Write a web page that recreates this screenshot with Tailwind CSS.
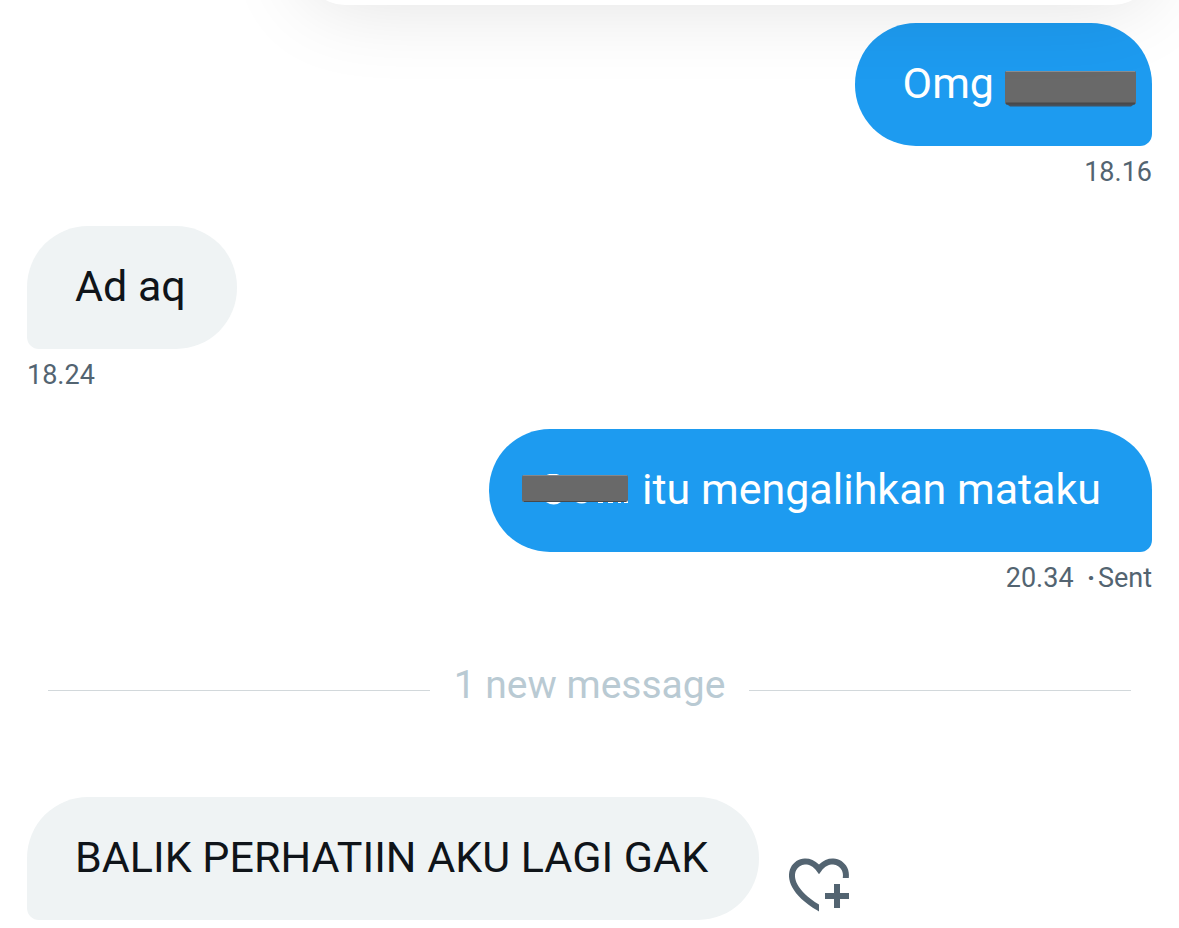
<!DOCTYPE html>
<html lang="id">
<head>
    <meta charset="UTF-8">
    <meta name="viewport" content="width=device-width, initial-scale=1.0">
    <title>Messages</title>
    <script src="https://cdn.jsdelivr.net/npm/@tailwindcss/browser@4"></script>
</head>
<body class="relative overflow-x-hidden bg-white font-['Roboto',sans-serif] text-[#0f1419]">

    <!-- Floating header card -->
    <header class="pointer-events-none absolute -top-[195px] right-[26px] left-[305px] z-10 h-[200px] rounded-[40px] bg-white shadow-[0_0_84px_rgba(0,0,0,0.12)]"></header>

    <main class="flex flex-col px-[27px] pt-[23px]">

        <!-- Sent -->
        <div class="flex flex-col items-end">
            <div class="flex items-center gap-[10px] rounded-[61px] rounded-br-xl bg-[#1d9bf0] pt-[31px] pr-[16px] pb-[33px] pl-[48px]">
                <p class="text-[43px] leading-[59px] text-white">Omg</p>
                <svg class="mt-[10px] h-9 w-[132px]" viewBox="0 0 132 36" aria-hidden="true">
                    <path d="M1 32h131l-5 3.500H6z" fill="#46525e" />
                    <rect x="1" width="131" height="33" rx="1.500" fill="#696969" />
                    <path d="M2 .5h129" stroke="#8b8d90" />
                    <path d="M2 32.500h129" stroke="#47484b" stroke-width="2" />
                </svg>
            </div>
            <time class="mt-2 text-[27px] leading-9 text-[#536471]">18.16</time>
        </div>

        <!-- Received -->
        <div class="mt-9 flex flex-col items-start">
            <div class="rounded-[61px] rounded-bl-xl bg-[#eff3f4] pt-[31px] pr-[51px] pb-[33px] pl-[48px]">
                <p class="text-[43px] leading-[59px]">Ad aq</p>
            </div>
            <time class="mt-2 text-[27px] leading-9 text-[#536471]">18.24</time>
        </div>

        <!-- Sent -->
        <div class="mt-9 flex flex-col items-end">
            <div class="flex items-center gap-[13px] rounded-[61px] rounded-br-xl bg-[#1d9bf0] pt-[31px] pr-[51px] pb-[33px] pl-[33px]">
                <svg class="h-8 w-[107px]" viewBox="0 0 107 32" aria-hidden="true">
                    <path d="M23 2q8-5 16 0zM24 28h15q-7 5-15 0zM54 28h11q-5 3-11 0zM76 27h5v2h-5zM86 27h5v2h-5zM96 27h3v2h-3zM102 26h4v3h-4z" fill="#fff" />
                    <rect y="1" width="106" height="27" rx="2" fill="#696969" />
                    <path d="M1 1.500h104" stroke="#85878a" />
                    <path d="M2 27.500h102" stroke="#47484b" />
                </svg>
                <p class="text-[43px] leading-[59px] text-white">itu mengalihkan mataku</p>
            </div>
            <p class="mt-2 text-[27px] leading-9 text-[#536471]"><time>20.34</time> &nbsp;<b>·</b>&hairsp;Sent</p>
        </div>

        <!-- Unread divider -->
        <div class="mx-[21px] mt-[63px] flex items-center gap-6">
            <span class="h-px flex-1 bg-[#d2d8db]"></span>
            <p class="pb-[10px] text-[39px] leading-[52px] text-[#b9cad3]">1 new message</p>
            <span class="h-px flex-1 bg-[#d2d8db]"></span>
        </div>

        <!-- Received -->
        <div class="mt-[76px] mb-2 flex items-end gap-6">
            <div class="rounded-[61px] rounded-bl-xl bg-[#eff3f4] pt-[31px] pr-[51px] pb-[33px] pl-[48px]">
                <p class="text-[43px] leading-[59px]">BALIK PERHATIIN AKU LAGI GAK</p>
            </div>
            <button type="button" aria-label="Add reaction" class="size-[72px] text-[#536471]">
                <svg viewBox="0 0 24 24" fill="currentColor" class="size-full">
                    <path d="M17 12v3h-2.998v2h3v3h2v-3h3v-2h-3.001v-3H17zm-5 6.839c-3.871-2.340-6.053-4.639-7.127-6.609-1.112-2.040-1.031-3.700-.479-4.820.561-1.130 1.667-1.840 2.910-1.910 1.222-.060 2.680.510 3.892 2.160l.806 1.090.805-1.090c1.211-1.650 2.668-2.220 3.890-2.160 1.242.070 2.347.780 2.908 1.910.334.677.490 1.554.321 2.590h2.011c.153-1.283-.039-2.469-.539-3.480-.887-1.790-2.647-2.910-4.601-3.010-1.650-.090-3.367.560-4.796 2.010-1.430-1.450-3.147-2.100-4.798-2.010-1.954.100-3.714 1.220-4.601 3.010-.896 1.810-.846 4.170.514 6.670 1.353 2.480 4.003 5.120 8.382 7.670l.502.299v-2.320z" />
                </svg>
            </button>
        </div>
    </main>
</body>
</html>
